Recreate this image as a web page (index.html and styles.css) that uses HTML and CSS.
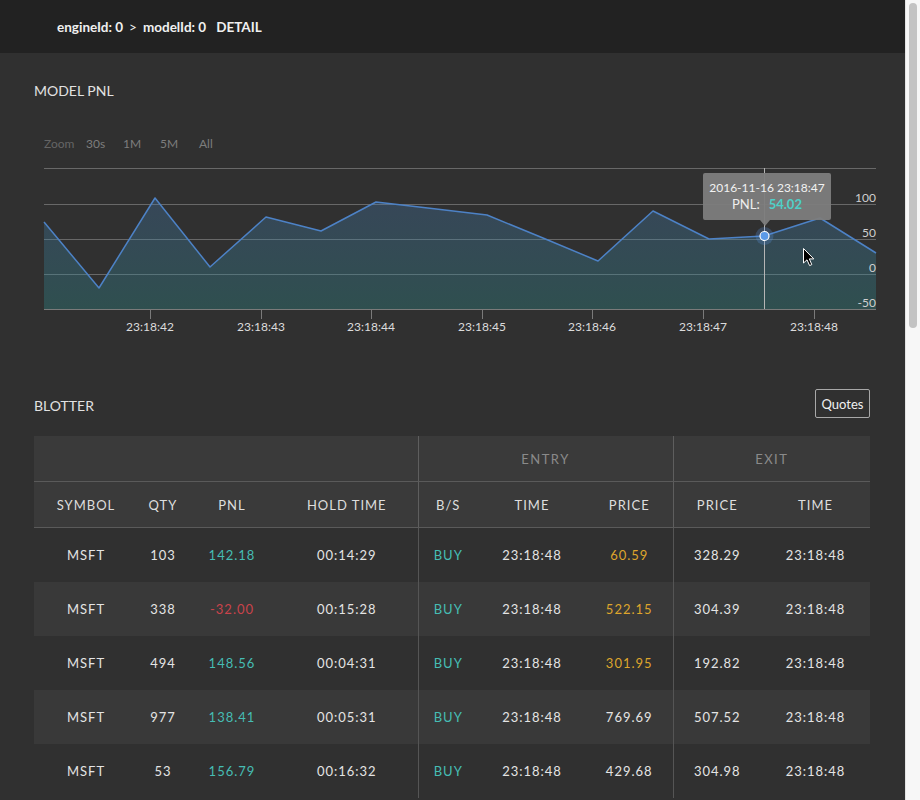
FILE: index.html
```html
<!DOCTYPE html>
<html>
<head>
<meta charset="utf-8">
<link rel="stylesheet" href="styles.css">
</head>
<body>
<header class="topbar">
  <span class="crumb">engineId: 0</span>
  <span class="sep">&gt;</span>
  <span class="crumb">modelId: 0</span>
  <span class="crumb detail">DETAIL</span>
</header>
<main class="page">
  <h2 class="section-title">MODEL PNL</h2>
  <svg class="chart" width="842" height="220" viewBox="34 120 842 220" xmlns="http://www.w3.org/2000/svg">
    <defs>
      <linearGradient id="areaFill" gradientUnits="userSpaceOnUse" x1="0" y1="190" x2="0" y2="309">
        <stop offset="0" stop-color="rgb(74,127,192)" stop-opacity="0.28"/>
        <stop offset="1" stop-color="rgb(45,140,140)" stop-opacity="0.34"/>
      </linearGradient>
    </defs>
    <g class="zoom-btns">
      <text x="44" y="148" class="zoom-label">Zoom</text>
      <text x="86" y="148" class="zoom-btn">30s</text>
      <text x="123" y="148" class="zoom-btn">1M</text>
      <text x="160" y="148" class="zoom-btn">5M</text>
      <text x="199" y="148" class="zoom-btn">All</text>
    </g>
    <g class="grid">
      <line x1="44" y1="168.5" x2="876" y2="168.5"/>
      <line x1="44" y1="204.5" x2="876" y2="204.5"/>
      <line x1="44" y1="239.5" x2="876" y2="239.5"/>
      <line x1="44" y1="274.5" x2="876" y2="274.5"/>
    </g>
    <path class="area" d="M44,222 L99,288 L155,198 L210,267 L266,217 L321,231 L376,202 L432,208.5 L487,215 L543,238 L598,261 L653,211 L709,239 L764,236 L820,218 L876,253 L876,309 L44,309 Z" fill="url(#areaFill)"/>
    <path class="line" d="M44,222 L99,288 L155,198 L210,267 L266,217 L321,231 L376,202 L432,208.5 L487,215 L543,238 L598,261 L653,211 L709,239 L764,236 L820,218 L876,253"/>
    <line class="axis" x1="44" y1="309.5" x2="876" y2="309.5"/>
    <g class="ticks">
      <line x1="150.5" y1="310" x2="150.5" y2="319"/>
      <line x1="261.5" y1="310" x2="261.5" y2="319"/>
      <line x1="371.5" y1="310" x2="371.5" y2="319"/>
      <line x1="482.5" y1="310" x2="482.5" y2="319"/>
      <line x1="592.5" y1="310" x2="592.5" y2="319"/>
      <line x1="703.5" y1="310" x2="703.5" y2="319"/>
      <line x1="814.5" y1="310" x2="814.5" y2="319"/>
    </g>
    <g class="xlabels">
      <text x="150" y="331">23:18:42</text>
      <text x="261" y="331">23:18:43</text>
      <text x="371" y="331">23:18:44</text>
      <text x="482" y="331">23:18:45</text>
      <text x="592" y="331">23:18:46</text>
      <text x="703" y="331">23:18:47</text>
      <text x="814" y="331">23:18:48</text>
    </g>
    <g class="ylabels">
      <text x="876" y="202">100</text>
      <text x="876" y="237">50</text>
      <text x="876" y="272">0</text>
      <text x="876" y="307">-50</text>
    </g>
    <line class="crosshair" x1="764.5" y1="168" x2="764.5" y2="309"/>
    <circle class="halo" cx="764.5" cy="236" r="9"/>
    <circle class="marker" cx="764.5" cy="236" r="4.5"/>
    <g class="tooltip">
      <path class="tip-box" d="M705,173 H829 Q831,173 831,175 V218 Q831,220 829,220 H770 L765,226 L760,220 H705 Q703,220 703,218 V175 Q703,173 705,173 Z"/>
      <text x="767" y="192" class="tip-date">2016-11-16 23:18:47</text>
      <text x="767" y="209" class="tip-row"><tspan class="tip-key">PNL:</tspan><tspan class="tip-val" dx="9">54.02</tspan></text>
    </g>
    <path class="cursor" d="M803.5,248.5 L803.5,263 L807,259.8 L809.6,265.6 L811.8,264.6 L809.3,258.9 L813.8,258.9 Z"/>
  </svg>

  <div class="blotter-head">
    <h2 class="section-title">BLOTTER</h2>
    <button class="btn">Quotes</button>
  </div>

  <table class="blotter">
    <colgroup>
      <col style="width:104px"><col style="width:50px"><col style="width:88px"><col style="width:142px">
      <col style="width:60px"><col style="width:108px"><col style="width:87px">
      <col style="width:88px"><col style="width:109px">
    </colgroup>
    <thead>
      <tr class="group-row">
        <th colspan="4"></th>
        <th colspan="3" class="group sep-l">ENTRY</th>
        <th colspan="2" class="group sep-l">EXIT</th>
      </tr>
      <tr class="col-row">
        <th>SYMBOL</th><th>QTY</th><th>PNL</th><th>HOLD TIME</th>
        <th class="sep-l">B/S</th><th>TIME</th><th>PRICE</th>
        <th class="sep-l">PRICE</th><th>TIME</th>
      </tr>
    </thead>
    <tbody>
      <tr>
        <td>MSFT</td><td>103</td><td class="pos">142.18</td><td>00:14:29</td>
        <td class="sep-l buy">BUY</td><td>23:18:48</td><td class="warn">60.59</td>
        <td class="sep-l">328.29</td><td>23:18:48</td>
      </tr>
      <tr>
        <td>MSFT</td><td>338</td><td class="neg">-32.00</td><td>00:15:28</td>
        <td class="sep-l buy">BUY</td><td>23:18:48</td><td class="warn">522.15</td>
        <td class="sep-l">304.39</td><td>23:18:48</td>
      </tr>
      <tr>
        <td>MSFT</td><td>494</td><td class="pos">148.56</td><td>00:04:31</td>
        <td class="sep-l buy">BUY</td><td>23:18:48</td><td class="warn">301.95</td>
        <td class="sep-l">192.82</td><td>23:18:48</td>
      </tr>
      <tr>
        <td>MSFT</td><td>977</td><td class="pos">138.41</td><td>00:05:31</td>
        <td class="sep-l buy">BUY</td><td>23:18:48</td><td>769.69</td>
        <td class="sep-l">507.52</td><td>23:18:48</td>
      </tr>
      <tr>
        <td>MSFT</td><td>53</td><td class="pos">156.79</td><td>00:16:32</td>
        <td class="sep-l buy">BUY</td><td>23:18:48</td><td>429.68</td>
        <td class="sep-l">304.98</td><td>23:18:48</td>
      </tr>
    </tbody>
  </table>
</main>
<div class="scrollbar" aria-hidden="true"><div class="scroll-thumb"></div></div>
</body>
</html>
```
FILE: styles.css
```css
html { background: #303030; }
body {
  margin: 0 15px 0 0;
  background: #303030;
  font-family: Lato, "Open Sans", "Liberation Sans", sans-serif;
  color: #e4e4e4;
  min-height: 1940px;
}

.scrollbar {
  position: fixed;
  top: 0;
  right: 0;
  bottom: 0;
  width: 14px;
  background: #f7f7f7;
  border-left: 1px solid #e3e3e3;
}
.scroll-thumb {
  margin: 3px 3px 0 3px;
  height: 325px;
  border-radius: 4px;
  background: #c3c3c3;
}

.topbar {
  height: 53px;
  background: #222222;
  display: flex;
  align-items: center;
  padding-left: 57px;
  font-size: 13.5px;
  font-weight: 700;
  color: #f0f0f0;
}
.sep { margin: 0 6px; font-weight: 400; }
.detail { margin-left: 10px; }

.page { padding: 0 35px 0 34px; }

.section-title {
  margin: 0;
  font-size: 14px;
  font-weight: 400;
  line-height: 20px;
  color: #e2e2e2;
}
.page > .section-title { padding-top: 28px; }

.chart { display: block; margin-top: 19px; overflow: visible; }
.chart text { font-family: Lato, "Open Sans", "Liberation Sans", sans-serif; }
.zoom-label { font-size: 12px; fill: #656565; }
.zoom-btn { font-size: 12px; fill: #7d7d7d; }
.grid line { stroke: #686868; stroke-width: 1; }
.axis { stroke: #7a7a7a; stroke-width: 1; }
.ticks line { stroke: #7a7a7a; stroke-width: 1; }
.line { fill: none; stroke: #4d82c6; stroke-width: 1.5; stroke-linejoin: round; }
.xlabels text { font-size: 12px; fill: #dcdcdc; text-anchor: middle; }
.ylabels text { font-size: 12px; fill: #cfcfcf; text-anchor: end; }
.crosshair { stroke: #b5b5b5; stroke-width: 1; }
.halo { fill: rgba(90,150,230,0.25); }
.marker { fill: #5b9ae8; stroke: #ffffff; stroke-width: 1.2; }
.tip-box { fill: rgba(125,125,125,0.95); }
.tip-date { font-size: 12px; fill: #f2f2f2; text-anchor: middle; }
.tip-row { font-size: 13px; text-anchor: middle; }
.tip-key { fill: #eeeeee; }
.tip-val { fill: #4fd0c8; font-weight: 700; }
.cursor { fill: #000; stroke: #fff; stroke-width: 1; stroke-linejoin: round; }

.blotter-head {
  display: flex;
  justify-content: space-between;
  align-items: center;
  margin-top: 49px;
}
.blotter-head .section-title { padding-top: 5px; }
.btn {
  height: 29px;
  width: 55px;
  padding: 0;
  background: transparent;
  border: 1px solid #a8a8a8;
  border-radius: 2px;
  color: #f0f0f0;
  font-family: Lato, "Open Sans", "Liberation Sans", sans-serif;
  font-size: 13px;
}

.blotter {
  margin-top: 18px;
  width: 836px;
  border-collapse: collapse;
  table-layout: fixed;
  font-size: 13px;
  letter-spacing: 1px;
}
.blotter thead { background: #3a3a3a; }
.blotter th {
  height: 46px;
  padding: 0;
  font-weight: 400;
  color: #dedede;
  text-align: center;
}
.group-row th { border-bottom: 1px solid #5a5a5a; height: 45px; }
.col-row th { border-bottom: 1px solid #5a5a5a; height: 45px; }
.blotter th.group { color: #8a8a8a; letter-spacing: 1.5px; }
.blotter .sep-l { border-left: 1px solid #5e5e5e; }
.blotter td {
  height: 54px;
  padding: 0;
  text-align: center;
  color: #e4e4e4;
}
.blotter tbody tr:nth-child(even) { background: #393939; }
.blotter td.sep-l { border-left-color: #555555; }
.pos, .buy { color: #46bdb4 !important; }
.neg { color: #c9434b !important; }
.warn { color: #dea52c !important; }
```
